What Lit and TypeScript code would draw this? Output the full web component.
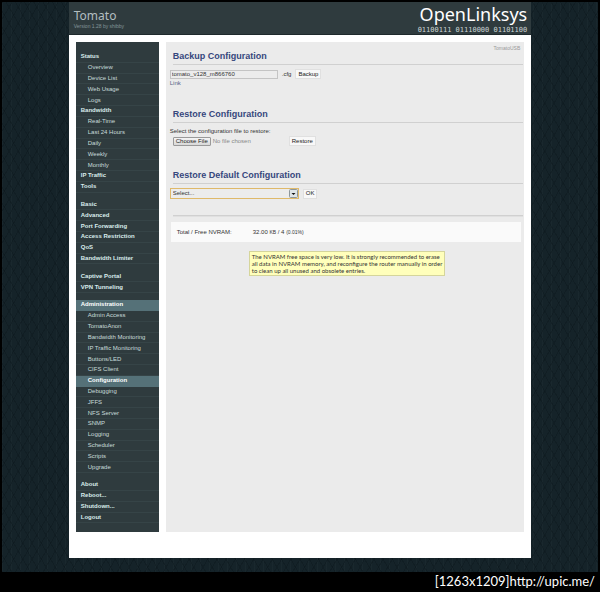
import { LitElement, html, css } from "lit";
import { customElement } from "lit/decorators.js";
import { classMap } from "lit/directives/class-map.js";

type Item = { label: string; sub?: boolean; on?: boolean };
const top = (label: string, on = false): Item => ({ label, on });
const sub = (...labels: string[]): Item[] => labels.map((label) => ({ label, sub: true, on: label === "Configuration" }));

const MENU: Item[][] = [
  [
    top("Status"),
    ...sub("Overview", "Device List", "Web Usage", "Logs"),
    top("Bandwidth"),
    ...sub("Real-Time", "Last 24 Hours", "Daily", "Weekly", "Monthly"),
    top("IP Traffic"),
    top("Tools"),
  ],
  ["Basic", "Advanced", "Port Forwarding", "Access Restriction", "QoS", "Bandwidth Limiter"].map((l) => top(l)),
  [top("Captive Portal"), top("VPN Tunneling")],
  [
    top("Administration", true),
    ...sub(
      "Admin Access", "TomatoAnon", "Bandwidth Monitoring", "IP Traffic Monitoring", "Buttons/LED",
      "CIFS Client", "Configuration", "Debugging", "JFFS", "NFS Server", "SNMP", "Logging",
      "Scheduler", "Scripts", "Upgrade",
    ),
  ],
  ["About", "Reboot...", "Shutdown...", "Logout"].map((l) => top(l)),
];

@customElement("side-menu")
export class SideMenu extends LitElement {
  static styles = css`
    :host { display: flex; flex-direction: column; }
    .menu {
      flex: 1; display: flex; flex-direction: column;
      background: #2f3b3e; padding: 10px 0 9px; box-sizing: border-box;
      font: 6px/9px "Liberation Sans", Arial, sans-serif;
    }
    .item {
      flex: 1 1 0; min-height: 9px; box-sizing: border-box;
      display: flex; align-items: center; padding-left: 5px;
      border-bottom: 1px solid #364447;
      color: #d9ecec; font-weight: 700; text-decoration: none; white-space: nowrap;
    }
    .sub { padding-left: 12px; font-weight: 400; color: #c9dbdc; }
    .on { background: #557178; border-color: #557178; color: #fff; font-weight: 700; }
    .gap { flex: 0 0 7px; }
  `;
  render() {
    return html`<nav class="menu">
      ${MENU.map((group, i) => html`
        ${i ? html`<div class="gap"></div>` : ""}
        ${group.map((m) => html`<a href="#" class=${classMap({ item: true, sub: !!m.sub, on: !!m.on })}>${m.label}</a>`)}
      `)}
    </nav>`;
  }
}

@customElement("app-root")
export class AppRoot extends LitElement {
  static styles = css`
    :host {
      display: flex; flex-direction: column; min-height: 100vh; box-sizing: border-box;
      background: #000; padding: 2px 2px 0;
      font: 6px/9px "Liberation Sans", Arial, sans-serif; color: #333;
    }
    .desk {
      flex: 1; display: flex; justify-content: center; padding-bottom: 14px;
      background-color: #152329;
      background-image:
        repeating-linear-gradient(60deg, #0c171c66 0 1px, #0000 1px 8px),
        repeating-linear-gradient(-60deg, #0c171c66 0 1px, #0000 1px 8px),
        repeating-linear-gradient(90deg, #26353a44 0 1px, #0000 1px 9px);
    }
    .page { width: 77.6%; display: flex; flex-direction: column; background: #fff; }
    .head {
      display: flex; justify-content: space-between; background: #2f3b3e;
      height: 33px; padding: 0 4px 0 5px; border-bottom: 1px solid #1e292c; box-sizing: border-box;
    }
    .name { font: 12px/14px "Noto Sans", sans-serif; color: #b3bec0; padding-top: 7px; }
    .version { font-size: 5px; line-height: 7px; color: #84969a; }
    .logo { color: #fff; text-align: right; }
    .word { font: 18px/24px "Noto Sans", sans-serif; }
    .bits { font: 7px/8px "DejaVu Sans Mono", monospace; color: #cbd4d5; }
    .body { flex: 1; display: flex; gap: 7px; padding: 7px 7px 26px; }
    .menu { flex: 0 0 83px; }
    .main { flex: 1; background: #ebebeb; padding: 0 1px 0 4px; position: relative; }
    .ident { position: absolute; right: 4px; top: 2px; color: #999; font-size: 5px; }
    .title {
      margin: 0 0 4px 3px; padding: 8px 0 2px; border-bottom: 1px solid #d0d0d0;
      font-size: 9px; line-height: 12px; font-weight: 700; color: #36477d;
    }
    .section { min-height: 61px; }
    .first { min-height: 58px; }
    .last { min-height: 54px; }
    .row { display: flex; align-items: center; gap: 4px; }
    .text {
      font: inherit; color: #333; width: 108px; height: 9px; box-sizing: border-box;
      border: 1px solid #c4c4c4; background: #ececec; padding: 0 1px; border-radius: 0;
    }
    .btn {
      font: inherit; color: #222; background: #f8f8f8; border: 1px solid #e0e0e0;
      height: 10px; line-height: 7px; padding: 0 2px; border-radius: 0;
    }
    .link { color: #566384; text-decoration: none; display: block; }
    .file { padding-left: 3px; gap: 2px; }
    .hidden { position: absolute; opacity: 0; width: 1px; height: 1px; }
    .choose {
      border: 1px solid #999; border-radius: 1px; background: linear-gradient(#f4f4f4, #d8d8d8);
      padding: 0 2px; line-height: 7px; color: #222;
    }
    .none { color: #888; width: 74px; }
    .pick { position: relative; width: 129px; height: 11px; }
    .select {
      appearance: none; font: inherit; color: #333; width: 100%; height: 100%; display: block;
      border: 1px solid #dfb96a; background: #ececec; padding: 0 2px; border-radius: 0; outline: none;
    }
    .arrow { position: absolute; right: 1px; top: 1px; pointer-events: none; }
    .rule { border-top: 1px solid #d0d0d0; border-bottom: 1px solid #e0e0e0; margin-left: 3px; }
    .nvram {
      display: flex; background: #fafafa; margin: 5px 2px 0 1px; padding: 6px 6px 5px;
    }
    .label { width: 76px; }
    .small { font-size: 5px; }
    .note {
      margin: 9px auto 0 79px; width: fit-content; box-sizing: border-box; white-space: nowrap;
      border: 1px solid #d5d59b; background: #ffffbb; padding: 1px 2px; color: #333;
      font: 6px/7px Lato, sans-serif;
    }
    .caption {
      flex: 0 0 20px; text-align: right; color: #fff; padding-right: 3px;
      font: 13px/19px Lato, sans-serif;
    }
  `;
  render() {
    return html`
      <div class="desk">
        <div class="page">
          <header class="head">
            <div><div class="name">Tomato</div><div class="version">Version 1.28 by shibby</div></div>
            <div class="logo"><div class="word">OpenLinksys</div><div class="bits">01100111 01110000 01101100</div></div>
          </header>
          <div class="body">
            <side-menu class="menu"></side-menu>
            <main class="main">
              <div class="ident">TomatoUSB</div>
              <section class="section first">
                <h2 class="title">Backup Configuration</h2>
                <div class="row">
                  <input class="text" aria-label="Backup file name" value="tomato_v128_m866760" />
                  <span>.cfg</span><button class="btn">Backup</button>
                </div>
                <a class="link" href="#">Link</a>
              </section>
              <section class="section">
                <h2 class="title">Restore Configuration</h2>
                <label for="file">Select the configuration file to restore:</label>
                <div class="row file">
                  <input class="hidden" id="file" type="file" />
                  <label class="choose" for="file">Choose File</label>
                  <span class="none">No file chosen</span><button class="btn">Restore</button>
                </div>
              </section>
              <section class="section last">
                <h2 class="title">Restore Default Configuration</h2>
                <div class="row">
                  <div class="pick">
                    <select class="select" aria-label="Default configuration"><option>Select...</option></select>
                    <svg class="arrow" width="9" height="9" viewBox="0 0 9 9">
                      <rect x=".5" y=".5" width="8" height="8" rx="1" fill="#dfe5e8" stroke="#8d979b" />
                      <path d="M2.5 4h4l-2 2z" fill="#111" />
                    </svg>
                  </div>
                  <button class="btn">OK</button>
                </div>
              </section>
              <div class="rule"></div>
              <div class="nvram">
                <div class="label">Total / Free NVRAM:</div>
                <div>32.00 <span class="small">KB</span> / 4 <span class="small">(0.01%)</span></div>
              </div>
              <div class="note">The NVRAM free space is very low. It is strongly recommended to erase<br />all data in NVRAM memory, and reconfigure the router manually in order<br />to clean up all unused and obsolete entries.</div>
            </main>
          </div>
        </div>
      </div>
      <footer class="caption">[1263x1209]http://upic.me/</footer>
    `;
  }
}
